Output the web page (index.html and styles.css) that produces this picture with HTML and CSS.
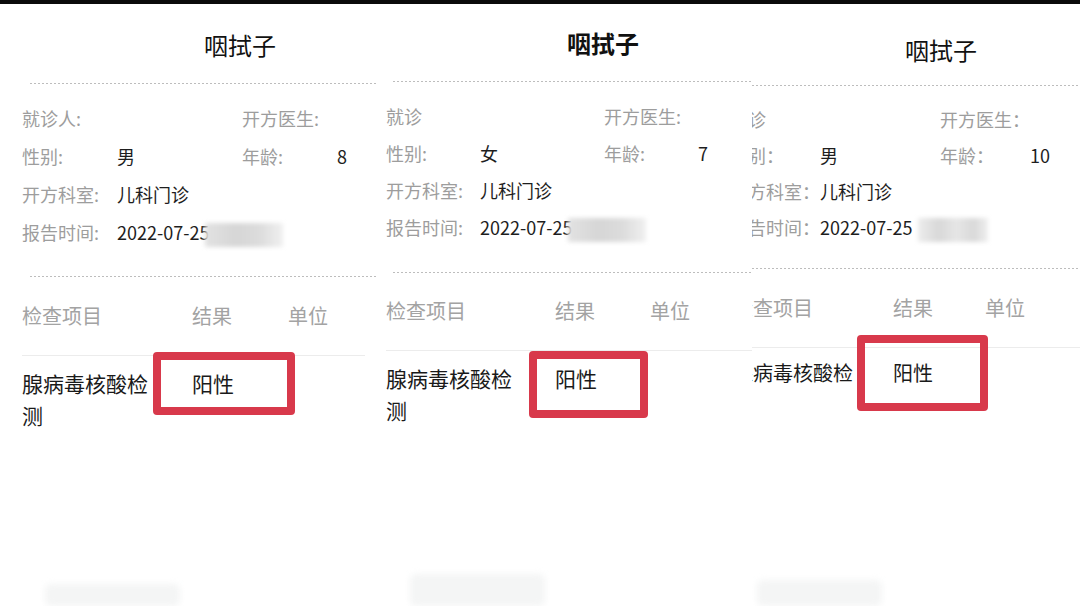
FILE: index.html
```html
<!DOCTYPE html>
<html lang="zh-CN">
<head>
    <meta charset="UTF-8">
    <meta name="viewport" content="width=device-width, initial-scale=1.0">
    <title>咽拭子 报告</title>
    <link rel="stylesheet" href="styles.css">
</head>
<body>
    <div class="sheet">

        <div class="report report-a">
            <h2 class="title">咽拭子</h2>
            <div class="dots"></div>
            <div class="info">
                <span class="label">就诊人:</span><span class="value"></span>
                <span class="label">开方医生:</span><span class="value"></span>
                <span class="label">性别:</span><span class="value">男</span>
                <span class="label">年龄:</span><span class="value">8</span>
                <span class="label">开方科室:</span><span class="value wide">儿科门诊</span>
                <span class="label">报告时间:</span><span class="value wide">2022-07-25<i class="redact"></i></span>
            </div>
            <div class="dots dots-low"></div>
            <div class="table">
                <div class="thead">
                    <span>检查项目</span><span>结果</span><span>单位</span>
                </div>
                <div class="trow">
                    <span class="item">腺病毒核酸检测</span>
                    <span class="result">阳性<i class="mark"></i></span>
                    <span></span>
                </div>
            </div>
            <div class="smudge"></div>
        </div>

        <div class="report report-b">
            <h2 class="title">咽拭子</h2>
            <div class="dots"></div>
            <div class="info">
                <span class="label">就诊</span><span class="value"></span>
                <span class="label">开方医生:</span><span class="value"></span>
                <span class="label">性别:</span><span class="value">女</span>
                <span class="label">年龄:</span><span class="value">7</span>
                <span class="label">开方科室:</span><span class="value wide">儿科门诊</span>
                <span class="label">报告时间:</span><span class="value wide">2022-07-25<i class="redact"></i></span>
            </div>
            <div class="dots dots-low"></div>
            <div class="table">
                <div class="thead">
                    <span>检查项目</span><span>结果</span><span>单位</span>
                </div>
                <div class="trow">
                    <span class="item">腺病毒核酸检测</span>
                    <span class="result">阳性<i class="mark"></i></span>
                    <span></span>
                </div>
            </div>
            <div class="smudge"></div>
        </div>

        <div class="report report-c">
            <h2 class="title">咽拭子</h2>
            <div class="dots"></div>
            <div class="info">
                <span class="label">就诊</span><span class="value"></span>
                <span class="label">开方医生：</span><span class="value"></span>
                <span class="label">性别：</span><span class="value">男</span>
                <span class="label">年龄：</span><span class="value">10</span>
                <span class="label">开方科室：</span><span class="value wide">儿科门诊</span>
                <span class="label">报告时间：</span><span class="value wide">2022-07-25<i class="redact"></i></span>
            </div>
            <div class="dots dots-low"></div>
            <div class="table">
                <div class="thead">
                    <span>检查项目</span><span>结果</span><span>单位</span>
                </div>
                <div class="trow">
                    <span class="item">腺病毒核酸检</span>
                    <span class="result">阳性<i class="mark"></i></span>
                    <span></span>
                </div>
            </div>
            <div class="smudge"></div>
        </div>

    </div>
</body>
</html>
```

FILE: styles.css
```css
html, body {
    margin: 0;
    height: 100%;
    background: #ffffff;
}

body {
    font-family: "Noto Sans CJK SC", "Noto Sans", sans-serif;
    color: #1c1c1c;
}

.sheet {
    display: flex;
    height: 606px;
    border-top: 4px solid #0a0a0a;
    box-sizing: border-box;
    overflow: hidden;
}

.report {
    position: relative;
    flex: none;
    overflow: hidden;
    height: 100%;
}

.report-a { width: 377px; }
.report-b { width: 375px; }
.report-c { width: 328px; }

/* title */
.title {
    margin: 25px 0 0;
    padding-left: 204px;
    font-size: 24px;
    line-height: 32px;
    font-weight: 400;
    color: #111;
}

.report-b .title {
    margin-top: 23px;
    padding-left: 190px;
    font-weight: 700;
}

.report-c .title {
    margin-top: 30px;
    padding-left: 153px;
}

/* dashed separators */
.dots {
    height: 1px;
    margin: 22px 0 0 30px;
    background: repeating-linear-gradient(to right, #bdbdbd 0 2px, transparent 2px 4px);
}

.report-b .dots { margin-left: 16px; }
.report-c .dots { margin-left: 0; margin-top: 19px; }

.report-a .dots-low { margin-top: 25px; }
.report-b .dots-low { margin-top: 26px; }
.report-c .dots-low { margin-top: 23px; }

/* patient info */
.info {
    display: grid;
    grid-template-columns: 95px 125px 95px auto;
    margin: 15px 0 0 22px;
    font-size: 18px;
    line-height: 38px;
    white-space: nowrap;
}

.report-b .info {
    grid-template-columns: 94px 124px 94px auto;
    margin: 16px 0 0 9px;
    line-height: 37px;
}

.report-c .info {
    grid-template-columns: 90px 120px 90px auto;
    margin: 15px 0 0 -22px;
    line-height: 36px;
}

.label {
    color: #9d9d9d;
}

.value {
    color: #1e1e1e;
}

.value.wide {
    grid-column: 2 / 5;
}

.redact {
    display: inline-block;
    width: 78px;
    height: 24px;
    margin-left: -4px;
    vertical-align: middle;
    background: linear-gradient(to right, #e2e2e2, #d6d6d6 40%, #dcdcdc 70%, #f0f0f0);
    filter: blur(2px);
}

.report-c .redact {
    width: 70px;
    margin-left: 6px;
    background: linear-gradient(to right, #ececec, #d8d8d8 30%, #e6e6e6 55%, #d9d9d9 80%, #efefef);
}

/* result table */
.table {
    margin: 24px 0 0 22px;
    font-size: 20px;
}

.report-b .table { margin: 23px 0 0 9px; }
.report-c .table { margin: 24px 0 0 0; }

.thead,
.trow {
    display: grid;
    grid-template-columns: 170px 96px auto;
}

.report-b .thead,
.report-b .trow {
    grid-template-columns: 169px 95px auto;
}

.report-c .thead,
.report-c .trow {
    grid-template-columns: 160px 92px auto;
    margin-left: -19px;
}

.thead {
    line-height: 30px;
    padding-bottom: 24px;
    color: #a3a3a3;
    border-bottom: 1px solid #ececec;
    margin-right: 12px;
}

.report-b .thead { margin-right: 0; }
.report-c .thead { margin-right: 0; }

.trow {
    padding-top: 11px;
    font-size: 21px;
    line-height: 32px;
    color: #1a1a1a;
}

.report-c .trow { padding-top: 9px; font-size: 20px; }

.item {
    padding-right: 38px;
}

.report-c .item { padding-right: 32px; }

.result {
    position: relative;
}

/* red highlight drawn over the result cell */
.mark {
    position: absolute;
    left: -39px;
    top: -15px;
    width: 142px;
    height: 63px;
    border: 8px solid #d8394b;
    border-radius: 4px;
    box-sizing: border-box;
}

.report-b .mark {
    left: -26px;
    top: -11px;
    width: 119px;
    height: 67px;
}

.report-c .mark {
    left: -36px;
    top: -22px;
    width: 131px;
    height: 76px;
}

/* faint blurred leftovers at the bottom */
.smudge {
    position: absolute;
    left: 45px;
    bottom: 0;
    width: 135px;
    height: 22px;
    background: #f4f5f5;
    border-radius: 6px;
    filter: blur(3px);
}

.report-b .smudge {
    left: 33px;
    height: 32px;
    width: 135px;
}

.report-c .smudge {
    left: 5px;
    height: 26px;
    width: 125px;
}
```
